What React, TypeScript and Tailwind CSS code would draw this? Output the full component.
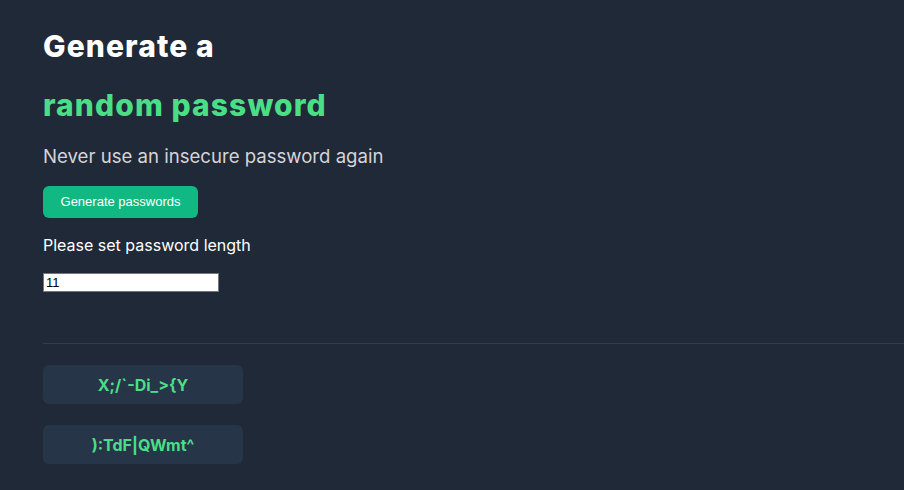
export default function App() {
  const passwords = ["X;/`-Di_>{Y", "):TdF|QWmt^"];

  return (
    <div className="min-h-[490px] bg-[#1f2937] pl-[43px] pt-[26px] font-['Inter',sans-serif]">
      <h1 className="text-[30px] font-extrabold leading-[40px] tracking-[1.1px] text-white">
        Generate a
      </h1>
      <h1 className="mt-[19px] text-[30px] font-extrabold leading-[40px] tracking-[1.1px] text-[#4adf86]">
        random password
      </h1>
      <p className="mt-[19px] text-[18.6px] leading-[24px] text-[#d5d4d8]">
        Never use an insecure password again
      </p>
      <button className="mt-[18px] h-[32px] w-[155px] rounded-md bg-[#10b981] font-['Liberation_Sans',sans-serif] text-[13px] text-white">
        Generate passwords
      </button>
      <p className="mt-[16px] text-[16px] leading-[22px] text-white">
        Please set password length
      </p>
      <input
        type="number"
        defaultValue={11}
        className="mt-[17px] block h-[19px] w-[176px] border border-[#767676] bg-white px-[2px] font-['Liberation_Sans',sans-serif] text-[13px] text-black"
      />
      <div className="mt-[51px] border-t border-[#2f3e4e]" />
      <div className="mt-[21px] flex flex-col gap-[21px] pb-[26px]">
        {passwords.map((p) => (
          <div
            key={p}
            className="flex h-[39px] w-[200px] items-center justify-center rounded-md bg-[#273549] text-[16px] font-bold text-[#4adf86]"
          >
            {p}
          </div>
        ))}
      </div>
    </div>
  );
}
